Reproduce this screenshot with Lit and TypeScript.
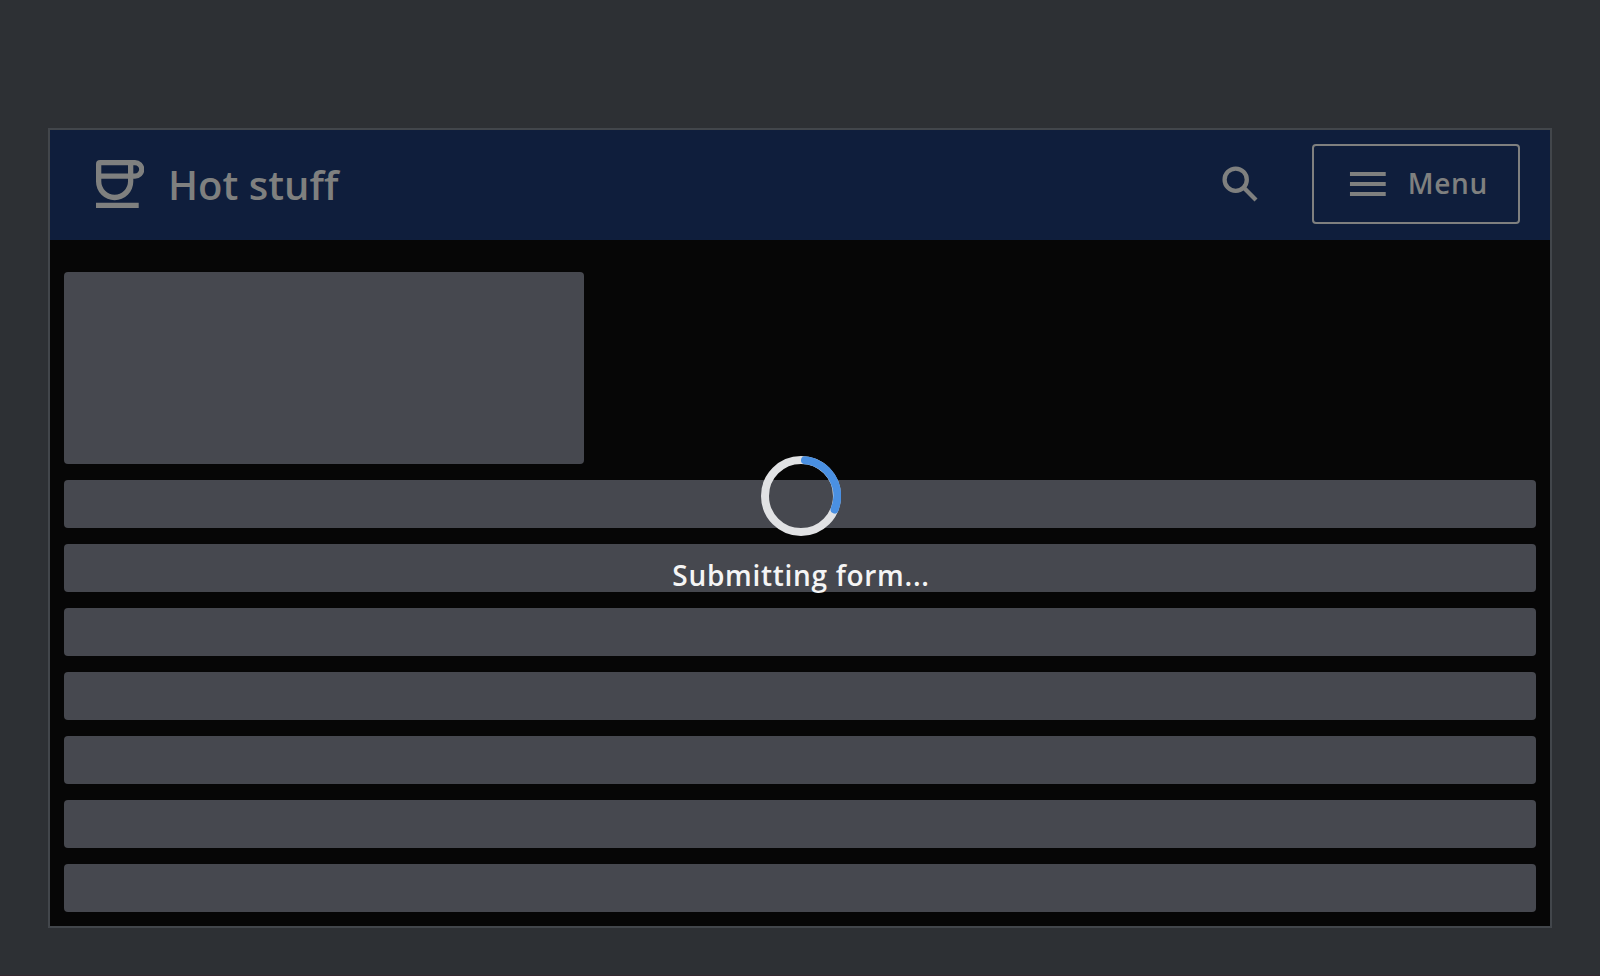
import { LitElement, html, css } from "lit";
import { customElement } from "lit/decorators.js";

@customElement("app-root")
export class AppRoot extends LitElement {
  static styles = css`
    :host {
      display: block;
      box-sizing: border-box;
      height: 976px;
      padding: 128px 48px 47px;
      border-bottom: 1px solid #35282f;
      background: #2d3034;
      font-family: "Open Sans", "Noto Sans", sans-serif;
      color: #7f807f;
    }
    .frame {
      position: relative;
      box-sizing: border-box;
      height: 800px;
      border: 2px solid #42464b;
      background: #060606;
    }
    .bar {
      display: flex;
      align-items: center;
      box-sizing: border-box;
      height: 110px;
      padding: 0 30px 0 46px;
      background: #0f1e3c;
    }
    svg {
      display: block;
      fill: currentColor;
    }
    .cup {
      margin-bottom: 2px;
    }
    .title {
      flex: 1;
      margin-left: 24px;
      font-size: 40px;
      line-height: 56px;
      font-weight: 600;
      white-space: nowrap;
    }
    .search {
      margin: 0 48px 2px 0;
      fill: none;
      stroke: currentColor;
    }
    .menu {
      display: flex;
      align-items: center;
      box-sizing: border-box;
      width: 208px;
      height: 80px;
      margin-bottom: 2px;
      padding: 0 30px;
      border: 2px solid currentColor;
      border-radius: 4px;
      font-size: 28px;
      font-weight: 600;
      letter-spacing: 0.7px;
    }
    .menu span {
      margin: 0 0 2px 16px;
    }
    .content {
      display: flex;
      flex-direction: column;
      gap: 16px;
      padding: 32px 14px 14px;
    }
    .block {
      width: 520px;
      height: 192px;
      border-radius: 4px;
      background: #46484f;
    }
    .line {
      height: 48px;
      border-radius: 4px;
      background: #46484f;
    }
    .overlay {
      position: absolute;
      inset: 0;
      display: flex;
      flex-direction: column;
      align-items: center;
      padding-top: 326px;
      color: #f5f5f5;
      font-size: 28px;
      line-height: 40px;
      font-weight: 600;
      letter-spacing: 0.7px;
    }
    .spinner {
      fill: none;
      stroke-width: 8;
      margin: 0 0 19px 2px;
    }
    .message {
      padding-left: 2px;
    }
    .track {
      stroke: #e1e2e4;
    }
    .arc {
      stroke: #4a90e2;
      stroke-linecap: round;
    }
  `;

  render() {
    return html`
      <div class="frame">
        <div class="bar">
          <svg class="cup" width="48" height="48" viewBox="0 0 48 48">
            <path
              fill-rule="evenodd"
              d="M4 0H39a9.3 9.3 0 0 1 0 18.7H37.3V21.500a18.650 18.650 0 0 1-37.300 0V4a4 4 0 0 1 4-4ZM5.300 5.200V13.500H32V5.200ZM37.300 5.200V13.500H39a4.150 4.150 0 0 0 0-8.300ZM5.300 18.700V21.300a13.350 13.350 0 0 0 26.700 0V18.700ZM0 42.700H42.700V48H0Z"
            />
          </svg>
          <div class="title">Hot stuff</div>
          <svg class="search" width="48" height="48" viewBox="0 0 48 48">
            <circle cx="19.7" cy="19.7" r="11.1" stroke-width="4.3" />
            <path d="M27.600 27.600L40 40" stroke-width="4.300" />
          </svg>
          <div class="menu">
            <svg width="48" height="48" viewBox="0 0 24 24">
              <path d="M3 18h18v-2H3v2zm0-5h18v-2H3v2zm0-7v2h18V6H3z" />
            </svg>
            <span>Menu</span>
          </div>
        </div>
        <div class="content">
          <div class="block"></div>
          ${Array.from({ length: 7 }, () => html`<div class="line"></div>`)}
        </div>
        <div class="overlay">
          <svg class="spinner" width="80" height="80" viewBox="0 0 80 80">
            <circle class="track" cx="40" cy="40" r="36" />
            <path class="arc" d="M44 4.200A36 36 0 0 1 73.600 53.500" />
          </svg>
          <div class="message">Submitting form...</div>
        </div>
      </div>
    `;
  }
}
